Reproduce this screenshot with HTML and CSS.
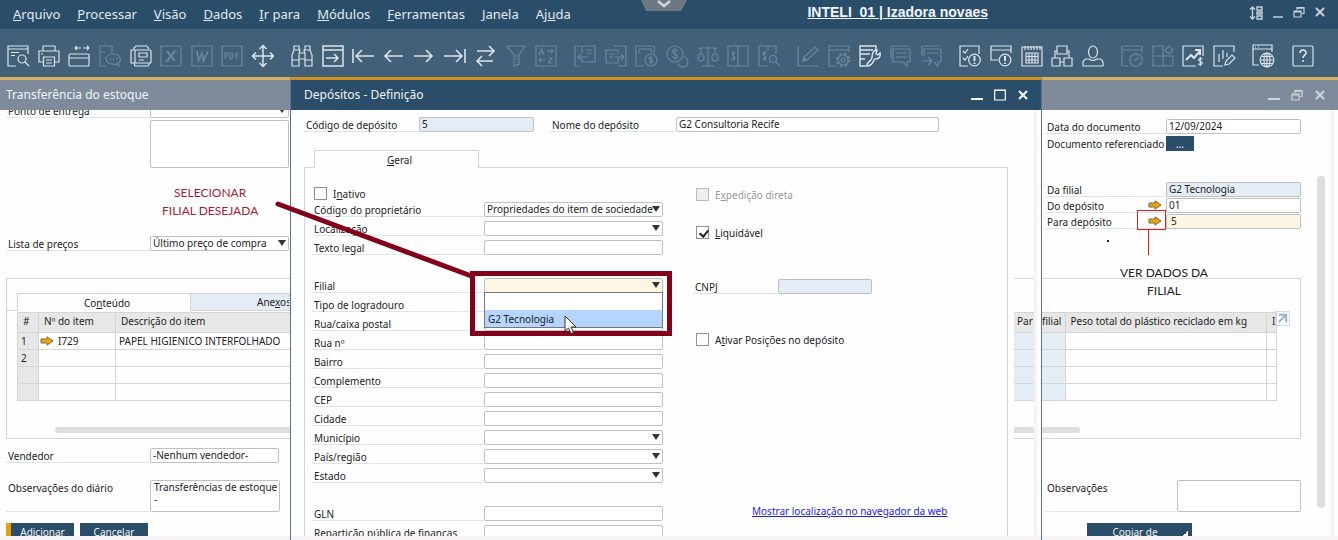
FILE: index.html
```html
<!DOCTYPE html>
<html lang="pt-BR">
<head>
<meta charset="utf-8">
<title>Depósitos - Definição</title>
<link rel="stylesheet" href="styles.css">
</head>
<body>
<svg class="defs" aria-hidden="true">
  <defs>
    <symbol id="restore" viewBox="0 0 12 12"><path d="M1 5h7v6H1zM1 6h7M4 4V1.500h7v6H9M4 2.200h7"/></symbol>
    <symbol id="close" viewBox="0 0 12 12"><path d="M2 2l8 8M10 2l-8 8"/></symbol>
    <symbol id="link-arrow" viewBox="0 0 14 10"><path d="M1 3h6V.8L13 5 7 9.200V7H1z" fill="#f0a30a" stroke="#7a6a40" stroke-width="1"/></symbol>
  </defs>
</svg>

<header class="menubar">
  <nav class="menu">
    <a href="#"><u>A</u>rquivo</a><a href="#"><u>P</u>rocessar</a><a href="#"><u>V</u>isão</a><a href="#"><u>D</u>ados</a><a href="#"><u>I</u>r para</a><a href="#"><u>M</u>ódulos</a><a href="#"><u>F</u>erramentas</a><a href="#"><u>J</u>anela</a><a href="#">Aj<u>u</u>da</a>
  </nav>
  <button class="notch" aria-label="Expandir"><svg viewBox="0 0 46 12"><path d="M0 0h46l-6 11H5z" fill="#6c7782"/><path d="M17 1l6 5 6-5" fill="none" stroke="#cfd6db" stroke-width="2.500"/></svg></button>
  <a class="account" href="#">INTELI_01 | Izadora novaes</a>
  <div class="controls controls--app">
    <button aria-label="Ajustar"><svg viewBox="0 0 14 14"><path d="M3.500 1v12M1 3.500L3.500 1 6 3.500M1 10.500L3.500 13 6 10.500" stroke-width="1.400"/><path d="M8 1h5v3H8zM8 6h5v2H8zM8 10h5v3H8z" stroke-width="1.400"/></svg></button>
    <button aria-label="Minimizar"><svg viewBox="0 0 12 12"><path d="M1 11h10" stroke-width="1.500"/></svg></button>
    <button aria-label="Restaurar"><svg><use href="#restore"/></svg></button>
    <button aria-label="Fechar"><svg class="bold"><use href="#close"/></svg></button>
  </div>
</header>

<div class="toolbar">
  <div class="tools">
    <button aria-label="Visualizar"><svg viewBox="0 0 22 22"><path d="M9 21H1V1h20v8M1 4h20M4 7.500h8M4 10.500h4"/><circle cx="15" cy="14" r="4"/><path d="M18 17l4 4"/></svg></button>
    <button aria-label="Imprimir"><svg viewBox="0 0 22 22"><path d="M5 6V1h12v5M5 17H1V6h20v11h-4M3 9h2"/><path d="M5.500 12h11v9h-11zM8 15h6M8 18h6"/></svg></button>
    <button aria-label="Largura"><svg viewBox="0 0 22 22"><rect x="1" y="9" width="20" height="12" rx="1"/><path d="M1 13h20M7 3h6M7 3l2-2M7 3l2 2M15 3h6M21 3l-2-2M21 3l-2 2"/></svg></button>
    <button disabled aria-label="SMS"><svg viewBox="0 0 22 22"><path d="M8 21H1V1h12v7M1 7h5"/><path d="M14 9c8 0 9 7 5 9l1 3-3-2c-7 1-10-2-10-5s3-5 7-5z"/><path d="M11 14h1M14 14h1M17 14h1" stroke-width="2"/></svg></button>
    <button aria-label="Fax"><svg viewBox="0 0 22 22"><path d="M4 5V3l2-2h11l2 3M4 18l1 3h13l2-3M5 5H1v13h4"/><rect x="5" y="5" width="16" height="13" rx="1"/><path d="M9 8h8v4H9zM9 15h5"/></svg></button>
    <button disabled aria-label="Excel"><svg viewBox="0 0 22 22"><path d="M1 1h20v20H1z"/><path d="M7 6l8 10M15 6L7 16" stroke-width="2.200"/><path d="M5 16h4M13 6h4"/></svg></button>
    <button disabled aria-label="Word"><svg viewBox="0 0 22 22"><path d="M1 1h20v20H1z"/><path d="M6 6l1.500 10L11 8l1.500 8L17 6" stroke-width="1.800"/></svg></button>
    <button disabled aria-label="PDF"><svg viewBox="0 0 22 22"><path d="M1 1h20v20H1z"/><path d="M4 14V8h2.500v3H4M9 8v6c4 0 4-6 0-6M15 14V8h3M15 11h2.500"/></svg></button>
    <button aria-label="Mover"><svg viewBox="0 0 22 22"><path d="M11 0v22M0 11h22M7.500 4L11 .5 14.500 4M7.500 18l3.500 3.500 3.500-3.500M4 7.500L.5 11 4 14.500M18 7.500l3.500 3.500-3.500 3.500" stroke-width="1.500"/></svg></button>
  </div>
  <div class="tools">
    <button aria-label="Localizar"><svg viewBox="0 0 22 22"><path d="M3 5V1h5v4M14 5V1h5v4M3 5L1 10v11h7V9L9 5zM19 5l2 5v11h-7V9l-1-4zM9 8h4M8 14h6M1 15h7M14 15h7"/></svg></button>
    <button aria-label="Adicionar"><svg viewBox="0 0 22 22"><path d="M1 1h20v20H1zM1 5h20M4 13h12M12 9l4 4-4 4" stroke-width="1.500"/></svg></button>
    <button aria-label="Primeiro"><svg viewBox="0 0 22 22"><path d="M1 4v14M4 11h18M10 5l-6 6 6 6" stroke-width="1.600"/></svg></button>
    <button aria-label="Anterior"><svg viewBox="0 0 22 22"><path d="M2 11h18M8 5l-6 6 6 6" stroke-width="1.600"/></svg></button>
    <button aria-label="Próximo"><svg viewBox="0 0 22 22"><path d="M1 11h18M13 5l6 6-6 6" stroke-width="1.600"/></svg></button>
    <button aria-label="Último"><svg viewBox="0 0 22 22"><path d="M21 4v14M0 11h18M12 5l6 6-6 6" stroke-width="1.600"/></svg></button>
    <button aria-label="Atualizar"><svg viewBox="0 0 22 22"><path d="M3 6h17M15 1l5 5-5 5M19 16H3M8 11l-5 5 5 5" stroke-width="1.600"/></svg></button>
    <button disabled aria-label="Filtrar"><svg viewBox="0 0 22 22"><path d="M2 1h18l-6 9v9l-5 2V10zM9 11h5M10 14h3"/></svg></button>
    <button disabled aria-label="Ordenar"><svg viewBox="0 0 22 22"><path d="M1 1h20v20H1z"/><path d="M4 10l2.500-6L9 10M5 8h3M12 6h6M16 4l2 2-2 2M10 15H4M6 13l-2 2 2 2M13.500 13H17l-3.500 5H17.500"/></svg></button>
  </div>
  <div class="tools">
    <button disabled aria-label="Documento base"><svg viewBox="0 0 22 22"><path d="M6 1H1v20h5M8 13v4h13V1H8v7M12 5h6M12 8h6M14 12H4M7 9l-3 3 3 3"/></svg></button>
    <button disabled aria-label="Documento de destino"><svg viewBox="0 0 22 22"><path d="M9 1h12v20h-8M13 13v5H1V5h12v4M4 9h6M4 12h4M10 12h9M16 9l3 3-3 3"/></svg></button>
    <button disabled aria-label="Lucro"><svg viewBox="0 0 22 22"><path d="M9 21H1V1h18v8M4 4h12v4M4 8V4"/><circle cx="16" cy="15" r="6"/><path d="M18 13c-5-2-5 1.500-2 2s3 3.500-2 2M16 11v8"/></svg></button>
    <button disabled aria-label="Pagamento"><svg viewBox="0 0 22 22"><circle cx="9" cy="9" r="8"/><path d="M12 6C5 3 5 8 9 9s4 6-3 3M9 3v12M18 12a5 5 0 1 1-6 6"/></svg></button>
    <button disabled aria-label="Balança"><svg viewBox="0 0 22 22"><path d="M1 3h20M11 1v20M5 21h12M4 3v6M18 3v6"/><rect x="1" y="9" width="6" height="7" rx="3"/><rect x="15" y="9" width="6" height="7" rx="3"/></svg></button>
    <button disabled aria-label="Conta"><svg viewBox="0 0 22 22"><path d="M1 1h20v20H1zM11 1v20M8.500 8c-4-2-4 1.500-2 3s2 4-2 3M6.500 6v10"/></svg></button>
    <button disabled aria-label="Pesquisar conta"><svg viewBox="0 0 22 22"><path d="M10 21H1V1h17v8M10 1v5M8.500 8c-4-2-4 1.500-2 3s2 4-2 3M6.500 6v10"/><circle cx="15" cy="14" r="3.500"/><path d="M18 17l4 4"/></svg></button>
  </div>
  <div class="tools">
    <button disabled aria-label="Editar"><svg viewBox="0 0 22 22"><path d="M1 1v20h20M6 16l1-4L18 2l3 3-11 10z"/><path d="M6 16l1-4 3 3z" fill="currentColor"/></svg></button>
    <button disabled aria-label="Configurar"><svg viewBox="0 0 22 22"><path d="M8 21H1V1h20v6M1 5h20"/><circle cx="15" cy="15" r="2"/><circle cx="15" cy="15" r="5"/><circle cx="15" cy="15" r="6.300" stroke-width="2" stroke-dasharray="2.500 2.450"/></svg></button>
    <button aria-label="Ferramentas"><svg viewBox="0 0 22 22"><path d="M7 21H1V1h16v4M1 5h13M1 9h10M1 14h5" stroke-width="1.400"/><path d="M8 21c-1-4 3-3 5-8 0-5 2-8 5-8l-1 4 2 1 2-2c1 5-2 6-5 6-3 3-2 7-8 7z" stroke-width="1.400"/></svg></button>
    <button disabled aria-label="Mensagens"><svg viewBox="0 0 22 22"><path d="M2 14V1h18M4 4h17v13h-3v4l-4-4H4zM7 8h11M7 12h11"/></svg></button>
    <button disabled aria-label="Encaminhar"><svg viewBox="0 0 22 22"><path d="M2 11V1h18M4 11V4h17v13h-3v4l-4-4M7 8h11M2 16h9M8 12l4 4-4 4"/></svg></button>
  </div>
  <div class="tools">
    <button aria-label="Tarefas"><svg viewBox="0 0 22 22"><path d="M9 21H1V1h19v8M4 6l2 2 3-4M4 13l2 2 3-4"/><circle cx="15.500" cy="15" r="5.800"/><path d="M15.500 11v5M15.500 17.500v1.500" stroke-width="2"/></svg></button>
    <button aria-label="Alertas"><svg viewBox="0 0 22 22"><path d="M8 15H1V1h20v7M1 5h20"/><circle cx="15" cy="15" r="5.800"/><path d="M15 11v5M15 17.500v1.500" stroke-width="2"/></svg></button>
    <button aria-label="Calendário"><svg viewBox="0 0 22 22"><path d="M1 2h20v19H1z"/><path d="M5 8h12v10H5zM5 11.500h12M5 15h12M8 8v10M11 8v10M14 8v10M4 1v4M7 1v4M10 1v4M13 1v4M16 1v4M19 1v4"/></svg></button>
    <button aria-label="Organograma"><svg viewBox="0 0 22 22"><path d="M6 1h10v8H6zM1 13h8v8H1zM13 13h8v8h-8zM4 13V6h2M16 6h2v7M9 17h4"/></svg></button>
    <button aria-label="Usuário"><svg viewBox="0 0 22 22"><ellipse cx="11" cy="7" rx="4.500" ry="6"/><path d="M7 14H4q-3 1-3 4v3h20v-3q0-3-3-4h-3q-4 3-8 0"/></svg></button>
  </div>
  <div class="tools">
    <button disabled aria-label="Painel"><svg viewBox="0 0 22 22"><path d="M7 21H1V1h20v7M1 5h20"/><circle cx="15" cy="15" r="6.300"/><path d="M14 16l4-4M10 15h1M15 10v1M19 19l-1-1"/></svg></button>
    <button disabled aria-label="Widgets"><svg viewBox="0 0 22 22"><path d="M11 1H1v10h10zM1 11h10v10H1zM11 11h10v10H11zM17 1l4 4-4 4-4-4z"/></svg></button>
    <button aria-label="Vendas"><svg viewBox="0 0 22 22"><path d="M14 21H1V1h20v10"/><path d="M4 15l5-5 3 3 6-7M13 5h5v5" stroke-width="2"/><path d="M20.500 14c-4-1.500-5 1.500-2 2.500s2 4-2.500 2.500M18.300 12v9"/></svg></button>
    <button aria-label="Relatório"><svg viewBox="0 0 22 22"><path d="M10 21H1V1h20v6M6 9v8M10 5v9M14 8v4"/><path d="M12 20l1-4 6-6 3 3-6 6z"/></svg></button>
  </div>
  <div class="tools"><button aria-label="Navegador"><svg viewBox="0 0 22 22"><path d="M7 20H1V0h19v7M1 4h19M3 2h1M6 2h1"/><circle cx="15" cy="15" r="6.800"/><ellipse cx="15" cy="15" rx="3" ry="6.800"/><path d="M8 15h14M15 8v14M9.500 11.500h11M9.500 18.500h11"/></svg></button></div>
  <div class="tools"><button aria-label="Ajuda"><svg viewBox="0 0 22 22"><rect x="1" y="1" width="20" height="20" rx="1"/><path d="M8 8c0-4 6-4 6 0 0 2-3 2.500-3 5M11 15v2" stroke-width="1.600"/></svg></button></div>
</div>

<main class="workspace">
  <section class="pane pane--left">
    <h2 class="titlebar">Transferência do estoque</h2>
    <div class="pane-body transfer">
      <div class="row row--cut"><label for="ponto">Ponto de entrega</label><span class="select"><select id="ponto"><option></option></select></span></div>
      <textarea class="address" aria-label="Endereço de entrega"></textarea>
      <div class="row row--prices"><label for="lista">Lista de preços</label><span class="select"><select id="lista"><option>Último preço de compra</option></select></span></div>
      <div class="panel">
        <div class="tabs"><button class="tab tab--on">Co<u>n</u>teúdo</button><button class="tab tab--off">Ane<u>x</u>os</button></div>
        <table class="grid items">
          <thead><tr><th class="num">#</th><th class="code">Nº do item</th><th>Descrição do item</th></tr></thead>
          <tbody>
            <tr><th>1</th><td><svg class="arrow"><use href="#link-arrow"/></svg>I729</td><td>PAPEL HIGIENICO INTERFOLHADO</td></tr>
            <tr><th>2</th><td></td><td></td></tr>
            <tr><th></th><td></td><td></td></tr>
            <tr><th></th><td></td><td></td></tr>
          </tbody>
        </table>
        <div class="hscroll hscroll--start"></div>
      </div>
      <div class="row row--seller"><label for="vend">Vendedor</label><input id="vend" value="-Nenhum vendedor-"></div>
      <div class="row row--tall"><label for="obs1">Observações do diário</label><textarea id="obs1">Transferências de estoque
-</textarea></div>
      <div class="actions"><button class="primary">Adicionar</button><button>Cancelar</button></div>
    </div>
  </section>

  <section class="dialog">
    <header class="titlebar titlebar--on"><h2>Depósitos - Definição</h2>
      <div class="controls">
        <button aria-label="Minimizar"><svg class="bold" viewBox="0 0 12 12"><path d="M0 10h12"/></svg></button>
        <button aria-label="Maximizar"><svg viewBox="0 0 12 12"><path d="M.7 1h10.600v10H.7zM.7 1.500h10.600"/></svg></button>
        <button aria-label="Fechar"><svg class="bold"><use href="#close"/></svg></button>
      </div>
    </header>
    <div class="dialog-body">
      <div class="warehouse">
        <div class="row ident"><label for="cod">Código de depósito</label><input id="cod" class="locked" value="5" readonly><label for="nome" class="second">Nome do depósito</label><input id="nome" class="name" value="G2 Consultoria Recife"></div>
        <div class="tabs tabs--single"><button class="tab tab--on"><u>G</u>eral</button></div>
        <div class="sheet">
          <div class="fields">
            <label class="check"><input type="checkbox"><span>I<u>n</u>ativo</span></label>
            <div class="row"><label for="f1">Código do proprietário</label><span class="select"><select id="f1"><option>Propriedades do item de sociedade</option></select></span></div>
            <div class="row"><label for="f2">Localização</label><span class="select"><select id="f2"><option></option></select></span></div>
            <div class="row"><label for="f3">Texto legal</label><input id="f3"></div>
            <div class="row row--blank"></div>
            <div class="row"><label for="f4">Filial</label><span class="select select--focus"><select id="f4"><option></option></select>
              <ul class="options" role="listbox"><li role="option"></li><li role="option" aria-selected="true">G2 Tecnologia</li></ul></span></div>
            <div class="row"><label for="f5">Tipo de logradouro</label><input id="f5"></div>
            <div class="row"><label for="f6">Rua/caixa postal</label><input id="f6"></div>
            <div class="row"><label for="f7">Rua nº</label><input id="f7"></div>
            <div class="row"><label for="f8">Bairro</label><input id="f8"></div>
            <div class="row"><label for="f9">Complemento</label><input id="f9"></div>
            <div class="row"><label for="f10">CEP</label><input id="f10"></div>
            <div class="row"><label for="f11">Cidade</label><input id="f11"></div>
            <div class="row"><label for="f12">Município</label><span class="select"><select id="f12"><option></option></select></span></div>
            <div class="row"><label for="f13">País/região</label><span class="select"><select id="f13"><option></option></select></span></div>
            <div class="row"><label for="f14">Estado</label><span class="select"><select id="f14"><option></option></select></span></div>
            <div class="row row--blank"></div>
            <div class="row"><label for="f15">GLN</label><input id="f15"></div>
            <div class="row"><label for="f16">Repartição pública de finanças</label><input id="f16"></div>
          </div>
          <div class="extras">
            <label class="check check--off"><input type="checkbox" disabled><span>E<u>x</u>pedição direta</span></label>
            <label class="check"><input type="checkbox" checked><span><u>L</u>iquidável</span></label>
            <div class="row"><label for="cnpj">CNPJ</label><input id="cnpj" class="locked" readonly></div>
            <label class="check"><input type="checkbox"><span>A<u>t</u>ivar Posições no depósito</span></label>
            <a class="maplink" href="#">Mostrar localização no navegador da web</a>
          </div>
        </div>
      </div>
      <div class="peek" aria-hidden="true">
        <div class="panel">
          <table class="grid"><thead><tr><th>Par</th></tr></thead><tbody><tr><td class="blue"></td></tr><tr><td class="blue"></td></tr><tr><td class="blue"></td></tr><tr><td class="blue"></td></tr></tbody></table>
          <div class="hscroll"></div>
        </div>
      </div>
      <div class="edge"></div>
    </div>
  </section>

  <section class="pane pane--right">
    <header class="titlebar">
      <div class="controls">
        <button aria-label="Minimizar"><svg class="bold" viewBox="0 0 12 12"><path d="M0 10h12"/></svg></button>
        <button aria-label="Restaurar"><svg><use href="#restore"/></svg></button>
        <button aria-label="Fechar"><svg class="bold"><use href="#close"/></svg></button>
      </div>
    </header>
    <div class="pane-body document">
      <div class="doc-main">
        <div class="row"><label for="data">Data do documento</label><input id="data" value="12/09/2024"></div>
        <div class="row row--ref"><span class="caption">Documento referenciado</span><button class="more">...</button></div>
        <div class="row row--branch"><label for="df">Da filial</label><input id="df" class="locked" value="G2 Tecnologia" readonly></div>
        <div class="row row--tight"><label for="dd">Do depósito<svg class="arrow"><use href="#link-arrow"/></svg></label><input id="dd" value="01"></div>
        <div class="row row--tight"><label for="pd">Para depósito<svg class="arrow"><use href="#link-arrow"/></svg></label><input id="pd" class="focus" value="5"></div>
        <div class="panel">
          <button class="expand" aria-label="Expandir tabela"><svg viewBox="0 0 14 14"><path d="M3 11l8-8M3 3h8v8" fill="none" stroke="#8fb0dc" stroke-width="2"/></svg></button>
          <table class="grid totals">
            <thead><tr><th class="branch">filial</th><th>Peso total do plástico reciclado em kg</th><th class="stub">I</th></tr></thead>
            <tbody><tr><td class="blue"></td><td></td><td></td></tr><tr><td class="blue"></td><td></td><td></td></tr><tr><td class="blue"></td><td></td><td></td></tr><tr><td class="blue"></td><td></td><td></td></tr></tbody>
          </table>
          <div class="hscroll hscroll--end"></div>
        </div>
        <div class="row row--tall"><label for="obs2">Observações</label><textarea id="obs2"></textarea></div>
        <div class="actions"><button class="copy">Copiar de</button></div>
      </div>
      <div class="vscroll"></div>
      <div class="edge"></div>
    </div>
    <div class="mark mark--arrow"></div>
    <p class="note note--branch">VER DADOS DA<br>FILIAL</p>
    <span class="speck"></span>
  </section>

  <p class="note note--select">SELECIONAR<br>FILIAL DESEJADA</p>
  <svg class="pointer-line" viewBox="0 0 200 80"><path d="M3 4l196 73" stroke="#820019" stroke-width="5" stroke-linecap="round"/></svg>
  <div class="mark mark--select"></div>
  <svg class="cursor" viewBox="0 0 14 20"><path d="M1 1v15l3.500-3 2.500 5.500 2.500-1-2.500-5.500H12z" fill="#fff" stroke="#333"/></svg>
</main>
</body>
</html>
```

FILE: styles.css
```css
:root {
  --navy: #2a4d69;
  --steel: #436079;
  --gray-bar: #7f8b9b;
  --line: #d4d6d6;
  --blue: #e4edf5;
  --wine: #820019;
}

* { box-sizing: border-box; }

body {
  margin: 0;
  height: 100vh;
  overflow: hidden;
  display: flex;
  flex-direction: column;
  background: #fff;
  color: #222;
  font: 10px/14px "Noto Sans", sans-serif;
}

.defs { display: none; }

button, input, select, textarea {
  font: inherit;
  color: inherit;
  margin: 0;
  padding: 0;
  border: 0;
  border-radius: 0;
  background: none;
  appearance: none;
}

h2 { margin: 0; font: inherit; }

/* Menu bar */
.menubar {
  position: relative;
  display: flex;
  align-items: center;
  height: 29px;
  flex: none;
  padding: 0 12px 2px 13px;
  background: var(--navy);
  color: #e3e9ee;
}
.menu { display: flex; gap: 17px; font-size: 13px; line-height: 20px; }
.menu a { color: inherit; text-decoration: none; }
.notch { position: absolute; left: 641px; top: 0; width: 46px; height: 12px; }
.notch svg { display: block; }
.account {
  margin-left: auto;
  margin-right: 261px;
  padding-bottom: 3px;
  color: #f2f5f7;
  font: bold 14px/16px "Liberation Sans", sans-serif;
}

.controls { display: flex; gap: 11px; }
.controls button { width: 12px; height: 12px; }
.controls svg { display: block; width: 12px; height: 12px; fill: none; stroke: currentColor; stroke-width: 1.2; }
.controls .bold { stroke-width: 2; }
.controls--app { gap: 9px; color: #c8d1d8; padding-bottom: 2px; }
.controls--app button:first-child, .controls--app button:first-child svg { width: 14px; height: 14px; }

/* Toolbar */
.toolbar {
  display: grid;
  grid-template-columns: 267px 266px 206px 145px 145px 114px 23px 22px;
  gap: 17px;
  flex: none;
  height: 48px;
  padding: 16px 0 0 7px;
  background: var(--steel);
  color: #dbe4eb;
}
.tools { display: flex; justify-content: space-between; }
.tools button { width: 22px; height: 22px; }
.tools button:disabled { color: #6c8598; }
.tools svg { display: block; width: 22px; height: 22px; overflow: visible; fill: none; stroke: currentColor; stroke-width: 1.2; }

/* Workspace */
.workspace { position: relative; flex: 1; min-height: 0; display: flex; }
.pane, .dialog { display: flex; flex-direction: column; min-width: 0; overflow: hidden; background: #fefefe; }
.pane { border-top: 3px solid #d9b162; border-bottom: 4px solid #f7f3f5; }
.pane--left { width: 290px; flex: none; }
.pane--right { position: relative; width: 296px; flex: none; }
.dialog {
  flex: 1;
  border: solid #557592;
  border-width: 0 1px;
  border-top: 3px solid #d2921b;
}
.titlebar {
  display: flex;
  align-items: center;
  flex: none;
  height: 30px;
  padding: 0 12px 0 6px;
  background: var(--gray-bar);
  color: #f1f3f5;
  font-size: 12px;
}
.titlebar .controls { margin-left: auto; color: #cfd4da; }
.titlebar--on { background: var(--navy); padding-left: 13px; }
.titlebar--on .controls { color: #fff; }

.pane-body, .dialog-body { flex: 1; min-height: 0; overflow: hidden; }
.dialog-body { display: flex; border-bottom: 4px solid #f7f3f5; }

/* Form rows */
.row { display: flex; height: 15px; flex: none; }
.row label, .caption {
  flex: none;
  display: flex;
  padding-left: 2px;
  line-height: 16px;
  white-space: nowrap;
  border-bottom: 1px solid #dfe5e5;
}
.row input, .row textarea, .select select, .address {
  display: block;
  min-width: 0;
  border: 1px solid #bdc1c2;
  border-radius: 2px;
  background: #fff;
  padding: 0 2px;
  line-height: 13px;
  resize: none;
  overflow: hidden;
}
.select { position: relative; display: block; }
.select select { width: 100%; height: 100%; }
.select::after {
  content: "";
  position: absolute;
  right: 3px;
  top: 4px;
  border: solid transparent;
  border-width: 6px 4px 0;
  border-top-color: #333;
}
.row .locked { background: var(--blue); }
.row .focus, .select--focus select { background: #fff5e3; }

/* Tabs, panels and tables */
.tabs { display: flex; height: 18px; }
.tabs::before { content: ""; width: 10px; border-bottom: 1px solid var(--line); }
.tab { border: 1px solid var(--line); text-align: center; }
.tab--on { border-bottom: 0; padding-left: 6px; }
.tab--off { background: var(--blue); border-left: 0; }

.panel { position: relative; border: solid var(--line); border-width: 1px 0; height: 161px; flex: none; }
.grid { border-collapse: collapse; table-layout: fixed; width: 100%; }
.grid th, .grid td {
  height: 17px;
  padding: 0 3px;
  border: 1px solid var(--line);
  text-align: left;
  font-weight: normal;
  line-height: 14px;
  white-space: nowrap;
  overflow: hidden;
}
.grid th { background: #e7e7e7; }
.grid thead th { height: 20px; padding-left: 5px; padding-bottom: 3px; border-left-color: var(--line); }
.grid .blue { background: var(--blue); }
.arrow { width: 14px; height: 10px; }
.hscroll { height: 6px; margin-top: 26px; background: #dedede; }

/* Transfer window, left side */
.transfer { padding-left: 6px; }
.transfer .row label { width: 144px; }
.transfer .row .select { width: 139px; }
.row--cut { height: 8px; overflow: hidden; align-items: flex-end; }
.row--cut label { height: 15px; }
.row--cut .select { height: 15px; }
.address { width: 139px; height: 48px; margin: 2px 0 0 144px; }
.row--prices { margin: 68px 0 27px; }
.transfer .panel { border-left-width: 1px; padding-top: 14px; }
.transfer .tab--on { width: 174px; }
.transfer .tab--off { flex: 1; padding-left: 66px; text-align: left; white-space: nowrap; overflow: hidden; }
.items { margin: 1px 0 0 10px; width: 284px; }
.items .num { width: 21px; }
.items .code { width: 77px; }
.items .arrow { vertical-align: -1px; margin: 0 4px 0 -2px; }
.hscroll--start { margin-left: 48px; border-radius: 3px 0 0 3px; }
.row--seller { margin: 9px 0 17px; }
.row--seller input { width: 129px; }
.row--tall { height: 32px; }
.row--tall textarea { line-height: 12px; padding: 0 0 0 3px; white-space: pre; }
.transfer .row--tall textarea { width: 130px; }
.actions { display: flex; gap: 6px; margin-top: 11px; }
.actions button { width: 68px; height: 17px; background: var(--navy); color: #f0f3f5; }
.actions .primary { border-left: 5px solid #e5a00d; }

/* Warehouse dialog */
.warehouse { flex: 1; min-width: 0; padding: 7px 0 0 13px; display: flex; flex-direction: column; }
.ident label { width: 115px; }
.ident input { width: 115px; }
.ident .second { width: 126px; margin-left: 16px; }
.ident .name { width: 263px; }
.tabs--single { margin-top: 18px; flex: none; }
.tabs--single .tab { width: 165px; }
.tabs--single::after { content: ""; flex: 1; border-bottom: 1px solid var(--line); }
.sheet { flex: 1; min-height: 0; display: flex; gap: 30px; padding: 19px 0 0 7px; border: solid var(--line); border-width: 0 1px; }
.fields { display: flex; flex-direction: column; gap: 4px; }
.fields .row label { width: 172px; }
.fields .row > input, .fields .select { width: 179px; }
.fields .check { margin: 0 0 -2px 2px; }
.check { display: flex; align-items: center; gap: 6px; height: 13px; }
.check input { width: 13px; height: 13px; border: 1px solid #8e9292; background: #fff; }
.check input:checked { position: relative; }
.check input:checked::after {
  content: "";
  position: absolute;
  left: 4px;
  top: 1px;
  width: 4px;
  height: 7px;
  border: solid #222;
  border-width: 0 2px 2px 0;
  transform: rotate(40deg);
}
.check--off { color: #9a9a9a; }
.check--off input { background: #eee; border-color: #bbb; }
.extras { padding-top: 1px; display: flex; flex-direction: column; align-items: flex-start; }
.extras .check { margin-left: 3px; }
.extras .check + .check { margin-top: 25px; }
.extras .row { margin: 40px 0 39px; }
.extras .row label { width: 85px; }
.extras .row input { width: 94px; }
.maplink { margin: 158px 0 0 59px; color: #2222dd; white-space: nowrap; }

.options {
  position: absolute;
  z-index: 1;
  left: 0;
  top: 14px;
  width: 100%;
  margin: 0;
  padding: 0;
  list-style: none;
  background: #fff;
  border: 1px solid #74787c;
}
.options li { height: 17px; padding-left: 3px; line-height: 18px; }
.options [aria-selected] { background: #b5d5ff; }

.peek { width: 20px; flex: none; margin-left: 6px; padding-top: 168px; overflow: hidden; }
.peek .panel { padding-top: 33px; }
.peek .grid th { padding-left: 3px; padding-right: 0; }
.peek .grid th, .peek .grid td { border-left: 0; border-right: 0; }
.edge { width: 3px; flex: none; background: #f7f3f5; margin-right: 4px; }

/* Transfer window, right side */
.document { display: flex; padding-top: 9px; }
.doc-main { flex: 1; min-width: 0; }
.document .row { padding-left: 3px; }
.document .row label, .caption { width: 121px; }
.document .row input, .document .row textarea { flex: 1; }
.document .row .arrow { margin: 2px 4px 0 auto; }
.document .row .caption { border: 0; }
.document .row .focus { padding-left: 4px; }
.row--ref { margin: 2px 0 31px; }
.more { width: 28px; background: var(--navy); color: #fff; line-height: 12px; }
.row--tight { margin-top: 1px; }
.document .panel { margin-top: 49px; padding-top: 33px; border-right-width: 1px; }
.totals { width: 235px; }
.totals .branch { width: 23px; padding-left: 0; padding-right: 0; }
.totals .stub { width: 10px; padding-right: 0; }
.totals tr > :first-child { border-left: 0; }
.expand { position: absolute; right: 10px; top: 32px; width: 15px; height: 15px; border: 1px solid #ccdcf0; }
.expand svg { display: block; }
.hscroll--end { width: 38px; border-radius: 0 3px 3px 0; }
.document .row--tall { margin-top: 41px; }
.document .row--tall label { width: 132px; }
.row--tall label { align-items: center; padding-bottom: 16px; }
.document .actions { margin-left: 45px; }
.actions .copy { width: 105px; background: linear-gradient(135deg, transparent 50%, #fff 50%) right 4px bottom 3px / 6px 6px no-repeat, var(--navy); padding-right: 9px; }
.vscroll { width: 8px; height: 332px; margin: 57px 6px 0 16px; background: #dedede; border-radius: 4px; }
.document .edge { margin-top: -9px; }

/* Annotations */
.note { position: absolute; margin: 0; text-align: center; font: 12px/18px Lato, sans-serif; white-space: nowrap; }
.note--select { left: 162px; top: 107px; color: #a01d38; }
.note--branch { left: 78px; top: 184px; color: #222; }
.pointer-line { position: absolute; left: 275px; top: 123px; width: 200px; height: 80px; }
.mark { position: absolute; }
.mark--select { left: 470px; top: 194px; width: 202px; height: 65px; border: 5px solid var(--wine); z-index: 2; }
.mark--arrow { left: 95px; top: 130px; width: 29px; height: 20px; border: 1px solid #e02020; }
.mark--arrow::after { content: ""; position: absolute; left: 10px; top: 19px; width: 1px; height: 25px; background: #e02020; }
.speck { position: absolute; left: 65px; top: 160px; width: 2px; height: 2px; background: #222; }
.cursor { position: absolute; left: 564px; top: 238px; width: 14px; height: 20px; z-index: 3; }
```
